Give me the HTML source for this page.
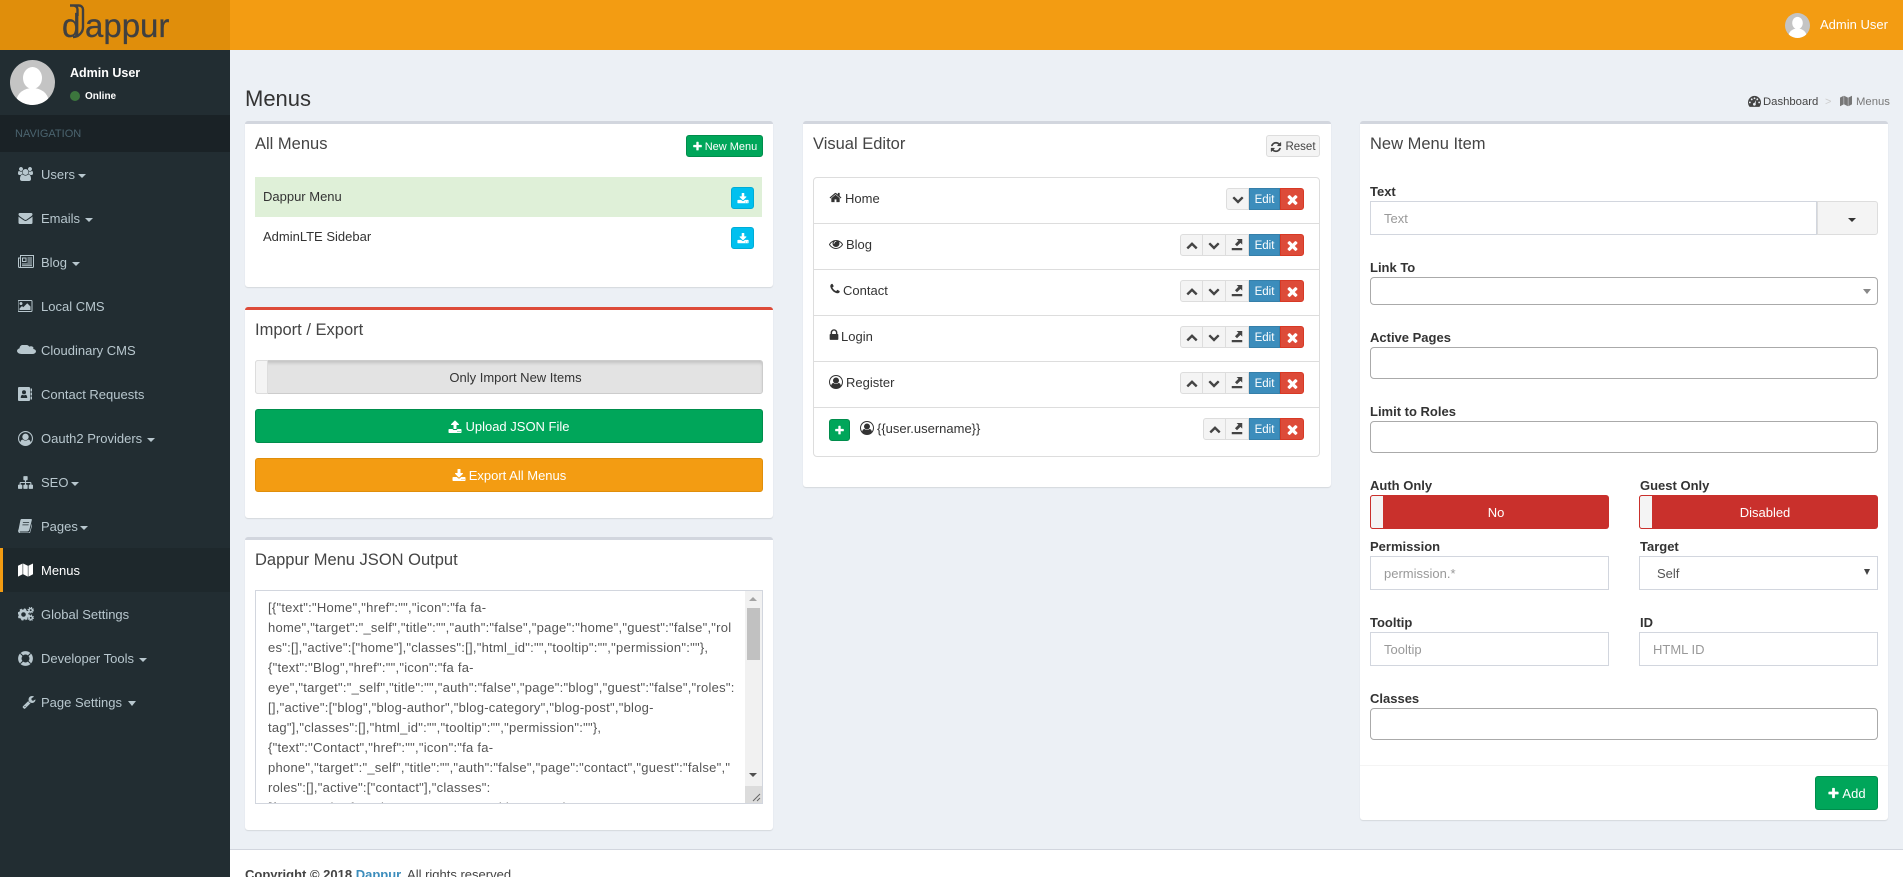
<!DOCTYPE html>
<html lang="en"><head><meta charset="utf-8"><title>Menus</title>
<style>
*{box-sizing:border-box}
html,body{margin:0;padding:0;width:1903px;height:877px;overflow:hidden;background:#ecf0f5;font-family:"Liberation Sans",sans-serif;font-size:13px;color:#333}
body{position:relative}
.a{position:absolute;white-space:nowrap}
.side{position:absolute;left:0;top:50px;width:230px;height:827px;background:#222d32}
.mi{position:absolute;left:0;width:230px;height:44px;color:#b8c7ce;line-height:44px}
.mi svg{position:absolute;left:18px;top:15px;fill:#b8c7ce}
.mi span{position:absolute;left:41px;top:1px}
.mi i{position:absolute;top:22px;border-top:4px solid #b8c7ce;border-left:4px solid transparent;border-right:4px solid transparent}
.box{position:absolute;background:#fff;border-top:3px solid #d2d6de;border-radius:3px;box-shadow:0 1px 1px rgba(0,0,0,.1)}
.t{position:absolute;font-size:16.5px;line-height:24px;color:#444;white-space:nowrap}
.btn{position:absolute;border:1px solid;border-radius:3px;display:flex;align-items:center;justify-content:center;white-space:nowrap;padding-top:1px}
.g{background:#00a65a;border-color:#008d4c;color:#fff}
.o{background:#f39c12;border-color:#e08e0b;color:#fff}
.ib{background:#00c0ef;border-color:#00acd6;border-radius:3px}
.l{position:absolute;font-weight:700;line-height:22px;color:#333;white-space:nowrap}
.in{position:absolute;background:#fff;border:1px solid #d2d6de;color:#999;padding-left:13px;padding-top:1px;line-height:32px;white-space:nowrap}
.in2{position:absolute;background:#fff;border:1px solid #aaa;border-radius:4px}
.row{position:absolute;left:814px;width:506px;height:1px;background:#ddd}
.rt{position:absolute;line-height:22px;color:#333;white-space:nowrap}
.bg{position:absolute;height:22px;top:0;display:flex;align-items:center;justify-content:center}
.grp{position:absolute;height:22px}
.gb{width:23px;background:#f4f4f4;border:1px solid #ddd;border-left-width:0;fill:#444}
.gb.f{border-left-width:1px;border-radius:3px 0 0 3px}
.ed{left:69px;width:31px;background:#3c8dbc;border:1px solid #367fa9;color:#fff;font-size:11.5px;padding-top:1px}
.x{left:100px;width:24px;background:#dd4b39;border:1px solid #d73925;border-radius:0 3px 3px 0;fill:#fff}
svg{display:block;flex:none}
</style></head><body>
<svg width="0" height="0" style="position:absolute"><defs>
<symbol id="plus" viewBox="0 0 1792 1792"><path d="M1600 736v192q0 40-28 68t-68 28h-416v416q0 40-28 68t-68 28h-192q-40 0-68-28t-28-68v-416h-416q-40 0-68-28t-28-68v-192q0-40 28-68t68-28h416v-416q0-40 28-68t68-28h192q40 0 68 28t28 68v416h416q40 0 68 28t28 68z"/></symbol>
<symbol id="times" viewBox="0 0 1792 1792"><path d="M1490 1322q0 40-28 68l-136 136q-28 28-68 28t-68-28l-294-294-294 294q-28 28-68 28t-68-28l-136-136q-28-28-28-68t28-68l294-294-294-294q-28-28-28-68t28-68l136-136q28-28 68-28t68 28l294 294 294-294q28-28 68-28t68 28l136 136q28 28 28 68t-28 68l-294 294 294 294q28 28 28 68z"/></symbol>
<symbol id="up" viewBox="0 0 1792 1792"><path d="M1683 1331l-166 165q-19 19-45 19t-45-19l-531-531-531 531q-19 19-45 19t-45-19l-166-165q-19-19-19-45.5t19-45.5l742-741q19-19 45-19t45 19l742 741q19 19 19 45.5t-19 45.5z"/></symbol>
<symbol id="down" viewBox="0 0 1792 1792"><path d="M1683 808l-742 741q-19 19-45 19t-45-19l-742-741q-19-19-19-45.5t19-45.5l166-165q19-19 45-19t45 19l531 531 531-531q19-19 45-19t45 19l166 165q19 19 19 45.5t-19 45.5z"/></symbol>
<symbol id="out" viewBox="0 0 16 16"><rect x="1" y="12" width="14" height="3"/><path d="M7.500 0H15v7.500L12.600 5.100 8 9.700 5.300 7l4.600-4.600z"/></symbol>
<symbol id="home" viewBox="0 0 1792 1792"><path d="M1472 992v480q0 26-19 45t-45 19h-384v-384h-256v384h-384q-26 0-45-19t-19-45v-480q0-1 .5-3t.5-3l575-474 575 474q1 2 1 6zm223-69l-62 74q-8 9-21 11h-3q-13 0-21-7l-692-577-692 577q-12 8-24 7-13-2-21-11l-62-74q-8-10-7-23.500t11-21.500l719-599q32-26 76-26t76 26l244 204v-195q0-14 9-23t23-9h192q14 0 23 9t9 23v408l219 182q10 8 11 21.500t-7 23.500z"/></symbol>
<symbol id="dl" viewBox="0 0 1792 1792"><path d="M1344 1344q0-26-19-45t-45-19-45 19-19 45 19 45 45 19 45-19 19-45zm256 0q0-26-19-45t-45-19-45 19-19 45 19 45 45 19 45-19 19-45zm128-224v320q0 40-28 68t-68 28h-1472q-40 0-68-28t-28-68v-320q0-40 28-68t68-28h465l135 136q58 56 136 56t136-56l136-136h464q40 0 68 28t28 68zm-325-569q17 41-14 70l-448 448q-18 19-45 19t-45-19l-448-448q-31-29-14-70 17-39 59-39h256v-448q0-26 19-45t45-19h256q26 0 45 19t19 45v448h256q42 0 59 39z"/></symbol>
<symbol id="ul" viewBox="0 0 1792 1792"><path d="M1344 1472q0-26-19-45t-45-19-45 19-19 45 19 45 45 19 45-19 19-45zm256 0q0-26-19-45t-45-19-45 19-19 45 19 45 45 19 45-19 19-45zm128-224v320q0 40-28 68t-68 28h-1472q-40 0-68-28t-28-68v-320q0-40 28-68t68-28h427q21 56 70.500 92t110.500 36h256q61 0 110.500-36t70.500-92h427q40 0 68 28t28 68zm-325-648q-17 40-59 40h-256v448q0 26-19 45t-45 19h-256q-26 0-45-19t-19-45v-448h-256q-42 0-59-40-17-39 14-69l448-448q18-19 45-19t45 19l448 448q31 30 14 69z"/></symbol>
<symbol id="env" viewBox="0 0 1792 1792"><path d="M1792 710v794q0 66-47 113t-113 47h-1472q-66 0-113-47t-47-113v-794q44 49 101 87 362 246 497 345 57 42 92.500 65.500t94.500 48 110 24.500h2q51 0 110-24.500t94.500-48 92.500-65.500q170-123 498-345 57-39 100-87zm0-294q0 79-49 151t-122 123q-376 261-468 325-10 7-42.500 30.500t-54 38-52 32.500-57.500 27-50 9h-2q-23 0-50-9t-57.500-27-52-32.500-54-38-42.500-30.500q-91-64-262-182.500t-205-142.500q-62-42-117-115.500t-55-136.500q0-78 41.500-130t118.500-52h1472q65 0 112.500 47t47.500 113z"/></symbol>
<symbol id="users" viewBox="0 0 1920 1792"><path d="M593 896q-162 5-265 128h-134q-82 0-138-40.500t-56-118.500q0-353 124-353 6 0 43.500 21t97.500 42.500 119 21.500q67 0 133-23-5 37-5 66 0 139 81 256zm1071 637q0 120-73 189.500t-194 69.500h-874q-121 0-194-69.500t-73-189.500q0-53 3.500-103.500t14-109 26.500-108.500 43-97.500 62-81 85.500-53.500 111.500-20q10 0 43 21.500t73 48 107 48 135 21.500 135-21.500 107-48 73-48 43-21.500q61 0 111.500 20t85.500 53.500 62 81 43 97.500 26.500 108.500 14 109 3.500 103.500zm-1024-1277q0 106-75 181t-181 75-181-75-75-181 75-181 181-75 181 75 75 181zm704 384q0 159-112.500 271.500t-271.500 112.500-271.500-112.500-112.500-271.500 112.500-271.500 271.500-112.500 271.500 112.500 112.500 271.500zm576 225q0 78-56 118.500t-138 40.500h-134q-103-123-265-128 81-117 81-256 0-29-5-66 66 23 133 23 59 0 119-21.500t97.500-42.500 43.500-21q124 0 124 353zm-128-609q0 106-75 181t-181 75-181-75-75-181 75-181 181-75 181 75 75 181z"/></symbol>
<symbol id="lock" viewBox="256 100 1280 1592"><path d="M640 768h512v-192q0-106-75-181t-181-75-181 75-75 181v192zm832 96v576q0 40-28 68t-68 28h-960q-40 0-68-28t-28-68v-576q0-40 28-68t68-28h32v-192q0-184 132-316t316-132 316 132 132 316v192h32q40 0 68 28t28 68z"/></symbol>
<symbol id="eye" viewBox="0 0 1792 1792"><path d="M1664 960q-152-236-381-353 61 104 61 225 0 185-131.500 316.500t-316.500 131.500-316.500-131.500-131.500-316.500q0-121 61-225-229 117-381 353 133 205 333.500 326.500t434.500 121.500 434.500-121.500 333.500-326.500zm-720-384q0-20-14-34t-34-14q-125 0-214.500 89.500t-89.500 214.500q0 20 14 34t34 14 34-14 14-34q0-86 61-147t147-61q20 0 34-14t14-34zm848 384q0 34-20 69-140 230-376.500 368.500t-499.500 138.500-499.500-139-376.500-368q-20-35-20-69t20-69q140-229 376.500-368t499.500-139 499.500 139 376.500 368q20 35 20 69z"/></symbol>
<symbol id="phone" viewBox="0 0 1792 1792"><path d="M1600 1240q0 27-10 70.500t-21 68.500q-21 50-122 106-94 51-186 51-27 0-53-3.500t-57.500-12.500-47-14.500-55.500-20.500-49-18q-98-35-175-83-127-79-264-216t-216-264q-48-77-83-175-3-9-18-49t-20.500-55.500-14.500-47-12.500-57.500-3.500-53q0-92 51-186 56-101 106-122 25-11 68.500-21t70.500-10q14 0 21 3 18 6 53 76 11 19 30 54t35 63.500 31 53.500q3 4 17.500 25t21.500 35.500 7 28.500q0 20-28.500 50t-62 55-62 53-28.500 46q0 9 5 22.500t8.500 20.500 14 24 11.500 19q76 137 174 235t235 174q2 1 19 11.500t24 14 20.500 8.500 22.500 5q18 0 46-28.500t53-62 55-62 50-28.500q14 0 28.500 7t35.500 21.500 25 17.500q25 15 53.500 31t63.500 35 54 30q70 35 76 53 3 7 3 21z"/></symbol>
<symbol id="uc" viewBox="0 0 1792 1792"><path d="M896 0q182 0 348 71t286 191 191 286 71 348q0 181-70.500 347t-190.500 286-286 191.500-349 71.500-349-71-285.500-191.500-190.500-286-71-347.500 71-348 191-286 286-191 348-71zm619 1351q149-205 149-455 0-156-61-298t-164-245-245-164-298-61-298 61-245 164-164 245-61 298q0 250 149 455 66-327 306-327 131 128 313 128t313-128q240 0 306 327zm-235-647q0-159-112.500-271.500t-271.500-112.500-271.500 112.500-112.500 271.500 112.500 271.500 271.500 112.500 271.500-112.500 112.500-271.500z"/></symbol>
<symbol id="ref" viewBox="0 0 1792 1792"><path d="M1639 1056q0 5-1 7-64 268-268 434.500t-478 166.500q-146 0-282.500-55t-243.500-157l-129 129q-19 19-45 19t-45-19-19-45v-448q0-26 19-45t45-19h448q26 0 45 19t19 45-19 45l-137 137q71 66 161 102t187 36q134 0 250-65t186-179q11-17 53-117 8-23 30-23h192q13 0 22.500 9.500t9.500 22.500zm25-800v448q0 26-19 45t-45 19h-448q-26 0-45-19t-19-45 19-45l138-138q-148-137-349-137-134 0-250 65t-186 179q-11 17-53 117-8 23-30 23h-199q-13 0-22.500-9.500t-9.500-22.500v-7q65-268 270-434.500t480-166.500q146 0 284 55.500t245 156.500l130-129q19-19 45-19t45 19 19 45z"/></symbol>
<symbol id="img" viewBox="0 0 1920 1792"><path d="M576 576q0 80-56 136t-136 56-136-56-56-136 56-136 136-56 136 56 56 136zm1024 384v448h-1408v-192l320-320 160 160 512-512zm96-704h-1600q-13 0-22.500 9.500t-9.500 22.500v1216q0 13 9.500 22.500t22.500 9.500h1600q13 0 22.500-9.500t9.500-22.500v-1216q0-13-9.500-22.500t-22.500-9.500zm160 32v1216q0 66-47 113t-113 47h-1600q-66 0-113-47t-47-113v-1216q0-66 47-113t113-47h1600q66 0 113 47t47 113z"/></symbol>
<symbol id="cloud" viewBox="0 200 1920 1340" preserveAspectRatio="none"><path d="M1920 1152q0 159-112.500 271.500t-271.500 112.500h-1088q-185 0-316.500-131.500t-131.500-316.500q0-132 71-241.500t187-163.500q-2-28-2-43 0-212 150-362t362-150q158 0 286.500 88t187.500 230q70-62 166-62 106 0 181 75t75 181q0 75-41 138 129 30 213 134.500t84 239.500z"/></symbol>
<symbol id="wr" viewBox="0 0 1792 1792"><path d="M448 1472q0-26-19-45t-45-19-45 19-19 45 19 45 45 19 45-19 19-45zm644-420l-682 682q-37 37-90 37-52 0-91-37l-106-108q-38-36-38-90 0-53 38-91l681-681q39 98 114.500 173.500t173.500 114.500zm634-435q0 39-23 106-47 134-164.500 217.500t-258.500 83.500q-185 0-316.500-131.500t-131.500-316.500 131.500-316.500 316.500-131.500q58 0 121.500 16.500t107.500 46.500q16 11 16 28t-16 28l-293 169v224l193 107q5-3 79-48.500t135.500-81 70.500-35.500q15 0 23.500 10t8.500 25z"/></symbol>
<symbol id="site" viewBox="0 0 1792 1792"><path d="M1792 1248v320q0 40-28 68t-68 28h-320q-40 0-68-28t-28-68v-320q0-40 28-68t68-28h96v-192h-512v192h96q40 0 68 28t28 68v320q0 40-28 68t-68 28h-320q-40 0-68-28t-28-68v-320q0-40 28-68t68-28h96v-192h-512v192h96q40 0 68 28t28 68v320q0 40-28 68t-68 28h-320q-40 0-68-28t-28-68v-320q0-40 28-68t68-28h96v-192q0-52 38-90t90-38h512v-192h-96q-40 0-68-28t-28-68v-320q0-40 28-68t68-28h320q40 0 68 28t28 68v320q0 40-28 68t-68 28h-96v192h512q52 0 90 38t38 90v192h96q40 0 68 28t28 68z"/></symbol>
<symbol id="news" viewBox="0 0 16 13"><path fill-rule="evenodd" d="M2 0h14v11.500a1.500 1.500 0 0 1-1.500 1.500H1.500A1.500 1.500 0 0 1 0 11.500V2.500h2zM3 1v10.500c0 .3-.2.500-.4.500h11.900c.3 0 .5-.2.500-.5V1zM1 3.500v8a.5.5 0 0 0 1 0v-8z"/><path fill-rule="evenodd" d="M4 2.500h4.500V7H4zM5 3.500V6h2.500V3.500z"/><rect x="9.500" y="2.500" width="4.500" height="1"/><rect x="9.500" y="4.500" width="4.500" height="1"/><rect x="9.500" y="6.500" width="4.500" height="1"/><rect x="4" y="8.500" width="10" height="1"/><rect x="4" y="10.200" width="10" height="1"/></symbol>
<symbol id="addr" viewBox="0 0 14 14"><path fill-rule="evenodd" d="M1 0h10a1 1 0 0 1 1 1v12a1 1 0 0 1-1 1H1a1 1 0 0 1-1-1V1a1 1 0 0 1 1-1zM6 3.200a2 2 0 1 0 0 4 2 2 0 0 0 0-4zM2.800 11h6.400c.2-2-.8-3.200-1.700-3.300-.5.400-1 .6-1.500.6s-1-.2-1.500-.6C3.600 7.800 2.600 9 2.800 11z"/><rect x="12.500" y="1.500" width="1.500" height="3"/><rect x="12.500" y="5.500" width="1.500" height="3"/><rect x="12.500" y="9.500" width="1.500" height="3"/></symbol>
<symbol id="book" viewBox="0 0 14 14"><path fill-rule="evenodd" d="M3.500 0H13c.8 0 1 .6.800 1.200L11.300 11c-.3.900-1 1.500-2 1.500H2.500c-.5 0-.8.200-.8.500s.3.500.8.500h8.300c.5 0 .7-.2.900-.7l2.400-8.800.6.400-2.500 9c-.2.900-.9 1.600-1.800 1.600H2.500C1.200 14 0 13 .1 11.800c0-.5.300-1 .5-1.500L2.400 1.200C2.600.500 3 0 3.500 0zM5 3.200l-.2.800h6.200l.2-.8zM4.500 5.500l-.2.800h6.200l.2-.8z"/></symbol>
<symbol id="map" viewBox="0 0 16 14"><path d="M0 2.500L4.900 0v11.500L0 14zM5.500 0l5 2.500V14l-5-2.500zM11.100 2.500L16 0v11.500L11.100 14z"/></symbol>
<symbol id="cogs" viewBox="0 0 16 14"><circle cx="5.500" cy="7.500" r="3.700" fill="none" stroke="currentColor" stroke-width="2.800"/><circle cx="5.500" cy="7.500" r="5.300" fill="none" stroke="currentColor" stroke-width="1.600" stroke-dasharray="2.200 2"/><circle cx="12.700" cy="3.200" r="1.700" fill="none" stroke="currentColor" stroke-width="1.500"/><circle cx="12.700" cy="3.200" r="2.800" fill="none" stroke="currentColor" stroke-width="1" stroke-dasharray="1.100 1.100"/><circle cx="12.700" cy="10.800" r="1.700" fill="none" stroke="currentColor" stroke-width="1.500"/><circle cx="12.700" cy="10.800" r="2.800" fill="none" stroke="currentColor" stroke-width="1" stroke-dasharray="1.100 1.100"/></symbol>
<symbol id="ring" viewBox="0 0 14 14"><circle cx="7" cy="7" r="5.300" fill="none" stroke="currentColor" stroke-width="3.200"/><path d="M2.200 2.200l2.600 2.600M11.800 2.200L9.200 4.800M2.200 11.800l2.600-2.600M11.800 11.800L9.200 9.200" stroke="#222d32" stroke-width=".9"/></symbol>
<symbol id="dash" viewBox="0 0 14 14"><path fill-rule="evenodd" d="M7 1a7 7 0 0 1 7 7c0 1.800-.6 3.500-1.700 4.800H1.700A7 7 0 0 1 0 8a7 7 0 0 1 7-7zM2 7a1 1 0 1 0 0 2 1 1 0 0 0 0-2zM4 3.700a1 1 0 1 0 0 2 1 1 0 0 0 0-2zM7 2.500a1 1 0 1 0 0 2 1 1 0 0 0 0-2zM12 7a1 1 0 1 0 0 2 1 1 0 0 0 0-2zM10 3.700a1 1 0 1 0 0 2 1 1 0 0 0 0-2zM8.800 5.200L7 8.500a1.500 1.500 0 1 0 1.200.8z"/></symbol>
<symbol id="ava" viewBox="0 0 45 45"><circle cx="22.500" cy="22.500" r="22.500" fill="#c4c4c4"/><clipPath id="cp"><circle cx="22.500" cy="22.500" r="22.500"/></clipPath><g clip-path="url(#cp)" fill="#fff"><ellipse cx="22.500" cy="18" rx="9.500" ry="11"/><ellipse cx="22.500" cy="41" rx="16" ry="13"/></g></symbol>
</defs></svg>

<!-- header -->
<div class="a" style="left:0;top:0;width:1903px;height:50px;background:#f39c12"></div>
<div class="a" style="left:0;top:0;width:230px;height:50px;background:#e08e0b"></div>
<svg class="a" style="left:50px;top:0" width="130" height="50"><text y="37" font-family="'Liberation Sans',sans-serif" font-size="33" fill="#404040" stroke="#404040" stroke-width=".3"><tspan x="12">d</tspan><tspan x="35">appur</tspan></text><path d="M27.500 16V9.500a4 4 0 0 0-4-4H20M22 5.500h7a4 4 0 0 1 4 4V27a10 10 0 0 1-10 10" fill="none" stroke="#404040" stroke-width="2.400"/></svg>
<svg class="a" style="left:1785px;top:13px" width="25" height="25"><use href="#ava"/></svg>
<div class="a" style="left:1820px;top:15px;line-height:20px;color:#fff;font-size:13px">Admin User</div>

<!-- sidebar -->
<div class="side"></div>
<svg class="a" style="left:10px;top:60px" width="45" height="45"><use href="#ava"/></svg>
<div class="a" style="left:70px;top:63px;line-height:20px;font-weight:700;color:#fff;font-size:12.5px">Admin User</div>
<div class="a" style="left:70px;top:91px;width:10px;height:10px;border-radius:50%;background:#3c763d"></div>
<div class="a" style="left:85px;top:87px;line-height:20px;color:#fff;font-size:10px;font-weight:700">Online</div>
<div class="a" style="left:0;top:115px;width:230px;height:37px;background:#1a2226;color:#4b646f;font-size:11px;line-height:39px;padding-left:15px">NAVIGATION</div>

<div class="mi" style="top:152px"><svg width="15" height="14"><use href="#users"/></svg><span>Users</span><i style="left:78px"></i></div>
<div class="mi" style="top:196px"><svg width="15" height="14"><use href="#env"/></svg><span>Emails</span><i style="left:85px"></i></div>
<div class="mi" style="top:240px"><svg width="16" height="13"><use href="#news"/></svg><span>Blog</span><i style="left:72px"></i></div>
<div class="mi" style="top:284px"><svg width="15" height="14"><use href="#img"/></svg><span>Local CMS</span></div>
<div class="mi" style="top:328px"><svg width="19" height="9" style="left:17px;top:17px"><use href="#cloud"/></svg><span>Cloudinary CMS</span></div>
<div class="mi" style="top:372px"><svg width="14" height="14"><use href="#addr"/></svg><span>Contact Requests</span></div>
<div class="mi" style="top:416px"><svg width="15" height="15"><use href="#uc"/></svg><span>Oauth2 Providers</span><i style="left:147px"></i></div>
<div class="mi" style="top:460px"><svg width="15" height="15"><use href="#site"/></svg><span>SEO</span><i style="left:71px"></i></div>
<div class="mi" style="top:504px"><svg width="14" height="14"><use href="#book"/></svg><span>Pages</span><i style="left:80px"></i></div>
<div class="mi" style="top:548px;background:#1e282c;color:#fff;border-left:3px solid #f39c12"><svg width="15" height="14" style="left:15px;fill:#fff"><use href="#map"/></svg><span style="left:38px">Menus</span></div>
<div class="mi" style="top:592px"><svg width="16" height="14" style="color:#b8c7ce"><use href="#cogs"/></svg><span>Global Settings</span></div>
<div class="mi" style="top:636px"><svg width="15" height="15" style="color:#b8c7ce"><use href="#ring"/></svg><span>Developer Tools</span><i style="left:139px"></i></div>
<div class="mi" style="top:680px"><svg width="14" height="14" style="left:22px"><use href="#wr"/></svg><span>Page Settings</span><i style="left:128px;border-top-width:5px;border-left-width:4.500px;border-right-width:4.500px;top:21px"></i></div>

<!-- title -->
<div class="a" style="left:245px;top:85px;font-size:22px;line-height:28px;color:#333">Menus</div>
<svg class="a" style="left:1748px;top:95px;fill:#444" width="13" height="13"><use href="#dash"/></svg>
<div class="a" style="left:1763px;top:92px;line-height:20px;font-size:11.300px;color:#444">Dashboard</div>
<div class="a" style="left:1825px;top:92px;line-height:20px;font-size:11px;color:#ccc">&gt;</div>
<svg class="a" style="left:1840px;top:95px;fill:#777" width="12" height="12"><use href="#map"/></svg>
<div class="a" style="left:1856px;top:92px;line-height:20px;font-size:11.300px;color:#777">Menus</div>

<!-- All Menus -->
<div class="box" style="left:245px;top:121px;width:528px;height:166px"></div>
<div class="t" style="left:255px;top:132px">All Menus</div>
<div class="btn g" style="left:686px;top:135px;width:77px;height:22px;font-size:11px;fill:#fff"><svg width="11" height="11" style="margin-right:2px"><use href="#plus"/></svg>New Menu</div>
<div class="a" style="left:255px;top:177px;width:507px;height:40px;background:#dff0d8"></div>
<div class="rt" style="left:263px;top:186px">Dappur Menu</div>
<div class="btn ib" style="left:731px;top:187px;width:23px;height:22px;fill:#fff"><svg width="12" height="12"><use href="#dl"/></svg></div>
<div class="rt" style="left:263px;top:226px">AdminLTE Sidebar</div>
<div class="btn ib" style="left:731px;top:227px;width:23px;height:22px;fill:#fff"><svg width="12" height="12"><use href="#dl"/></svg></div>

<!-- Import / Export -->
<div class="box" style="left:245px;top:307px;width:528px;height:211px;border-top-color:#dd4b39"></div>
<div class="t" style="left:255px;top:318px">Import / Export</div>
<div class="a" style="left:255px;top:360px;width:508px;height:34px;background:#e3e3e3;border:1px solid #ccc;border-radius:3px;box-shadow:inset 0 3px 3px -1px rgba(0,0,0,.15)"></div>
<div class="a" style="left:255px;top:360px;width:13px;height:34px;background:#f4f4f4;border:1px solid #ddd;border-radius:3px 0 0 3px"></div>
<div class="a" style="left:268px;top:360px;width:495px;height:34px;line-height:36px;text-align:center;color:#333">Only Import New Items</div>
<div class="btn g" style="left:255px;top:409px;width:508px;height:34px;fill:#fff"><svg width="14" height="14" style="margin-right:3px"><use href="#ul"/></svg>Upload JSON File</div>
<div class="btn o" style="left:255px;top:458px;width:508px;height:34px;fill:#fff"><svg width="14" height="14" style="margin-right:3px"><use href="#dl"/></svg>Export All Menus</div>

<!-- JSON -->
<div class="box" style="left:245px;top:537px;width:528px;height:293px"></div>
<div class="t" style="left:255px;top:548px">Dappur Menu JSON Output</div>
<div class="a" style="left:255px;top:590px;width:508px;height:214px;border:1px solid #d2d6de;overflow:hidden;background:#fff">
<div style="position:absolute;left:12px;top:7px;line-height:20px;color:#555;font-size:13px;letter-spacing:.25px;white-space:pre">[{"text":"Home","href":"","icon":"fa fa-
home","target":"_self","title":"","auth":"false","page":"home","guest":"false","rol
es":[],"active":["home"],"classes":[],"html_id":"","tooltip":"","permission":""},
{"text":"Blog","href":"","icon":"fa fa-
eye","target":"_self","title":"","auth":"false","page":"blog","guest":"false","roles":
[],"active":["blog","blog-author","blog-category","blog-post","blog-
tag"],"classes":[],"html_id":"","tooltip":"","permission":""},
{"text":"Contact","href":"","icon":"fa fa-
phone","target":"_self","title":"","auth":"false","page":"contact","guest":"false","
roles":[],"active":["contact"],"classes":
[{"text":"","href":"","icon":"","target":"","title":"","auth":"","page":"","guest":""</div>
<div style="position:absolute;right:0;top:0;width:17px;height:212px;background:#f1f1f1"></div>
<div style="position:absolute;right:0;top:17px;width:17px;height:52px;background:#c1c1c1;border:0 solid #f1f1f1;border-width:0 2px"></div>
<div style="position:absolute;right:5px;top:6px;border-bottom:4px solid #a3a3a3;border-left:4px solid transparent;border-right:4px solid transparent"></div>
<div style="position:absolute;right:5px;top:182px;border-top:4px solid #505050;border-left:4px solid transparent;border-right:4px solid transparent"></div>
<div style="position:absolute;right:0;bottom:0;width:17px;height:17px;background:#dcdcdc"><svg width="17" height="17"><path d="M8 15L15 8M12 15l3-3" stroke="#666" stroke-width="1"/></svg></div>
</div>

<!-- Visual Editor -->
<div class="box" style="left:803px;top:121px;width:528px;height:366px"></div>
<div class="t" style="left:813px;top:132px">Visual Editor</div>
<div class="btn" style="left:1266px;top:135px;width:54px;height:22px;background:#f4f4f4;border-color:#ddd;color:#444;font-size:11.500px;fill:#444"><svg width="12" height="12" style="margin-right:3px"><use href="#ref"/></svg>Reset</div>
<div class="a" style="left:813px;top:177px;width:507px;height:280px;border:1px solid #ddd;border-radius:4px"></div>
<div class="row" style="top:223px"></div><div class="row" style="top:269px"></div><div class="row" style="top:315px"></div><div class="row" style="top:361px"></div><div class="row" style="top:407px"></div>

<svg class="a" style="left:829px;top:191px;fill:#333" width="13" height="13"><use href="#home"/></svg><div class="rt" style="left:845px;top:188px">Home</div>
<svg class="a" style="left:829px;top:237px;fill:#333" width="14" height="14"><use href="#eye"/></svg><div class="rt" style="left:846px;top:234px">Blog</div>
<svg class="a" style="left:829px;top:283px;fill:#333" width="12" height="12"><use href="#phone"/></svg><div class="rt" style="left:843px;top:280px">Contact</div>
<svg class="a" style="left:829px;top:329px;fill:#333" width="10" height="12"><use href="#lock"/></svg><div class="rt" style="left:841px;top:326px">Login</div>
<svg class="a" style="left:829px;top:375px;fill:#333" width="14" height="14"><use href="#uc"/></svg><div class="rt" style="left:846px;top:372px">Register</div>
<div class="btn g" style="left:829px;top:419px;width:21px;height:22px;fill:#fff"><svg width="11" height="11"><use href="#plus"/></svg></div>
<svg class="a" style="left:860px;top:421px;fill:#333" width="14" height="14"><use href="#uc"/></svg><div class="rt" style="left:877px;top:418px">{{user.username}}</div>

<div class="grp" style="left:1180px;top:188px"><div class="bg gb f" style="left:46px;width:23px;border-left-width:1px"><svg width="12" height="12"><use href="#down"/></svg></div><div class="bg ed">Edit</div><div class="bg x"><svg width="15" height="15"><use href="#times"/></svg></div></div>
<div class="grp" style="left:1180px;top:234px"><div class="bg gb f" style="left:0"><svg width="12" height="12"><use href="#up"/></svg></div><div class="bg gb" style="left:23px"><svg width="12" height="12"><use href="#down"/></svg></div><div class="bg gb" style="left:46px"><svg width="12" height="12"><use href="#out"/></svg></div><div class="bg ed">Edit</div><div class="bg x"><svg width="15" height="15"><use href="#times"/></svg></div></div>
<div class="grp" style="left:1180px;top:280px"><div class="bg gb f" style="left:0"><svg width="12" height="12"><use href="#up"/></svg></div><div class="bg gb" style="left:23px"><svg width="12" height="12"><use href="#down"/></svg></div><div class="bg gb" style="left:46px"><svg width="12" height="12"><use href="#out"/></svg></div><div class="bg ed">Edit</div><div class="bg x"><svg width="15" height="15"><use href="#times"/></svg></div></div>
<div class="grp" style="left:1180px;top:326px"><div class="bg gb f" style="left:0"><svg width="12" height="12"><use href="#up"/></svg></div><div class="bg gb" style="left:23px"><svg width="12" height="12"><use href="#down"/></svg></div><div class="bg gb" style="left:46px"><svg width="12" height="12"><use href="#out"/></svg></div><div class="bg ed">Edit</div><div class="bg x"><svg width="15" height="15"><use href="#times"/></svg></div></div>
<div class="grp" style="left:1180px;top:372px"><div class="bg gb f" style="left:0"><svg width="12" height="12"><use href="#up"/></svg></div><div class="bg gb" style="left:23px"><svg width="12" height="12"><use href="#down"/></svg></div><div class="bg gb" style="left:46px"><svg width="12" height="12"><use href="#out"/></svg></div><div class="bg ed">Edit</div><div class="bg x"><svg width="15" height="15"><use href="#times"/></svg></div></div>
<div class="grp" style="left:1180px;top:418px"><div class="bg gb f" style="left:23px"><svg width="12" height="12"><use href="#up"/></svg></div><div class="bg gb" style="left:46px"><svg width="12" height="12"><use href="#out"/></svg></div><div class="bg ed">Edit</div><div class="bg x"><svg width="15" height="15"><use href="#times"/></svg></div></div>

<!-- New Menu Item -->
<div class="box" style="left:1360px;top:121px;width:528px;height:699px"></div>
<div class="t" style="left:1370px;top:132px">New Menu Item</div>
<div class="l" style="left:1370px;top:181px">Text</div>
<div class="in" style="left:1370px;top:201px;width:447px;height:34px">Text</div>
<div class="a" style="left:1817px;top:201px;width:61px;height:34px;background:#f4f4f4;border:1px solid #ddd;border-radius:0 3px 3px 0"></div>
<div class="a" style="left:1848px;top:218px;border-top:4px solid #333;border-left:4px solid transparent;border-right:4px solid transparent"></div>
<div class="l" style="left:1370px;top:257px">Link To</div>
<div class="in2" style="left:1370px;top:277px;width:508px;height:28px"></div>
<div class="a" style="left:1863px;top:289px;border-top:5px solid #888;border-left:4px solid transparent;border-right:4px solid transparent"></div>
<div class="l" style="left:1370px;top:327px">Active Pages</div>
<div class="in2" style="left:1370px;top:347px;width:508px;height:32px"></div>
<div class="l" style="left:1370px;top:401px">Limit to Roles</div>
<div class="in2" style="left:1370px;top:421px;width:508px;height:32px"></div>

<div class="l" style="left:1370px;top:475px">Auth Only</div>
<div class="l" style="left:1640px;top:475px">Guest Only</div>
<div class="a" style="left:1370px;top:495px;width:239px;height:34px;background:#c9302c;border-radius:3px;color:#fff;line-height:36px;text-align:center;padding-left:13px">No</div>
<div class="a" style="left:1370px;top:495px;width:14px;height:34px;background:#f4f4f4;border:1px solid #c9302c;border-radius:3px 0 0 3px"></div>
<div class="a" style="left:1639px;top:495px;width:239px;height:34px;background:#c9302c;border-radius:3px;color:#fff;line-height:36px;text-align:center;padding-left:13px">Disabled</div>
<div class="a" style="left:1639px;top:495px;width:14px;height:34px;background:#f4f4f4;border:1px solid #c9302c;border-radius:3px 0 0 3px"></div>

<div class="l" style="left:1370px;top:536px">Permission</div>
<div class="l" style="left:1640px;top:536px">Target</div>
<div class="in" style="left:1370px;top:556px;width:239px;height:34px">permission.*</div>
<div class="in" style="left:1639px;top:556px;width:239px;height:34px;color:#555;padding-left:17px">Self</div>
<div class="a" style="left:1864px;top:569px;border-top:6px solid #444;border-left:3px solid transparent;border-right:3px solid transparent"></div>
<div class="l" style="left:1370px;top:612px">Tooltip</div>
<div class="l" style="left:1640px;top:612px">ID</div>
<div class="in" style="left:1370px;top:632px;width:239px;height:34px">Tooltip</div>
<div class="in" style="left:1639px;top:632px;width:239px;height:34px">HTML ID</div>
<div class="l" style="left:1370px;top:688px">Classes</div>
<div class="in2" style="left:1370px;top:708px;width:508px;height:32px"></div>
<div class="a" style="left:1360px;top:765px;width:528px;height:1px;background:#f4f4f4"></div>
<div class="btn g" style="left:1815px;top:776px;width:63px;height:34px;fill:#fff"><svg width="13" height="13" style="margin-right:2px"><use href="#plus"/></svg>Add</div>

<!-- footer -->
<div class="a" style="left:230px;top:849px;width:1673px;height:28px;background:#fff;border-top:1px solid #d2d6de;overflow:hidden"><div class="a" style="left:15px;top:15px;line-height:20px;color:#444;font-size:13px"><b>Copyright © 2018 <span style="color:#3c8dbc">Dappur.</span></b> All rights reserved.</div></div>
</body></html>
